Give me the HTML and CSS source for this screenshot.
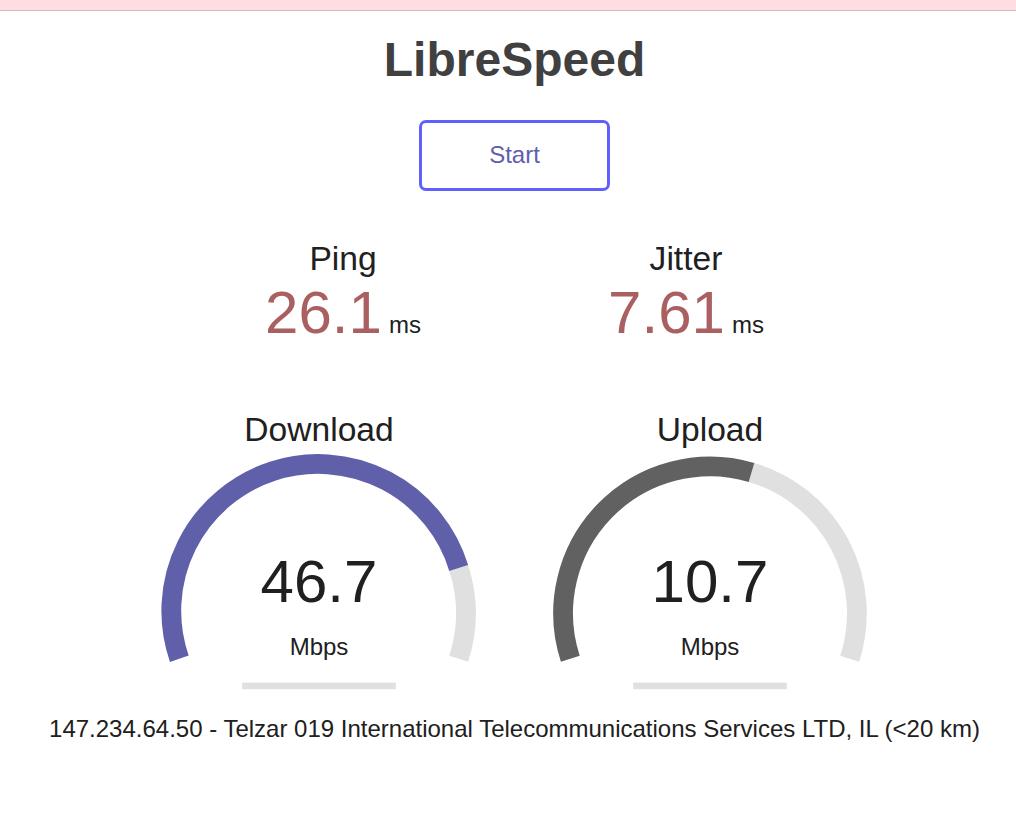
FILE: index.html
```html
<!DOCTYPE html>
<html lang="en">
<head>
  <meta charset="UTF-8">
  <title>LibreSpeed</title>
  <meta name="viewport" content="width=device-width,initial-scale=1.0">
  <link rel="stylesheet" href="styles.css">
</head>
<body>
  <div class="topbar"></div>
  <div class="page">
    <h1>LibreSpeed</h1>
    <div class="btnRow">
      <div id="startStopBtn">Start</div>
    </div>
    <div id="test">
      <div class="testGroup small">
        <div class="testArea2">
          <div class="testName">Ping</div>
          <div class="valueRow">
            <div class="meterText red">26.1</div>
            <div class="unit">ms</div>
          </div>
        </div>
        <div class="testArea2">
          <div class="testName">Jitter</div>
          <div class="valueRow">
            <div class="meterText red">7.61</div>
            <div class="unit">ms</div>
          </div>
        </div>
      </div>
      <div class="testGroup big">
        <div class="testArea">
          <div class="testName">Download</div>
          <svg class="meter" viewBox="0 0 384 300" width="384" height="300">
            <path d="M 331.7 159.0 A 146.9 146.9 0 0 1 331.7 249.7" fill="none" stroke="#E0E0E0" stroke-width="19.8"/>
            <path d="M 52.3 249.7 A 146.9 146.9 0 1 1 331.7 159.0" fill="none" stroke="#6060AA" stroke-width="19.8"/>
            <rect x="115.2" y="273.6" width="153.6" height="6.6" fill="#E0E0E0"/>
          </svg>
          <div class="meterText">46.7</div>
          <div class="unit">Mbps</div>
        </div>
        <div class="testArea">
          <div class="testName">Upload</div>
          <svg class="meter" viewBox="0 0 384 300" width="384" height="300">
            <path d="M 233.5 63.4 A 146.9 146.9 0 0 1 331.7 249.7" fill="none" stroke="#E0E0E0" stroke-width="19.8"/>
            <path d="M 52.3 249.7 A 146.9 146.9 0 0 1 233.5 63.4" fill="none" stroke="#616161" stroke-width="19.8"/>
            <rect x="115.2" y="273.6" width="153.6" height="6.6" fill="#E0E0E0"/>
          </svg>
          <div class="meterText">10.7</div>
          <div class="unit">Mbps</div>
        </div>
      </div>
      <div id="ipArea">147.234.64.50 - Telzar 019 International Telecommunications Services LTD, IL (&lt;20 km)</div>
    </div>
  </div>
</body>
</html>
```

FILE: styles.css
```css
html,body{
  border: none;
  padding: 0;
  margin: 0;
  background: #FFFFFF;
  color: #202020;
}
body{
  text-align: center;
  font-family: "Liberation Sans", Arial, sans-serif;
  font-size: 24px;
}
.topbar{
  height: 10px;
  background: #FFDDE3;
  border-bottom: 1px solid #D9B9C1;
}
.page{
  padding-left: 13px;
}
h1{
  color: #404040;
  font-size: 48px;
  line-height: 54px;
  margin: 22px 0 32px 0;
}
.btnRow{
  display: flex;
  justify-content: center;
  padding-top: 1px;
}
#startStopBtn{
  color: #6060AA;
  border: 3px solid #6060FF;
  border-radius: 7px;
  box-sizing: border-box;
  width: 191px;
  height: 71px;
  line-height: 64px;
  cursor: pointer;
}
#test{
  margin-top: 49px;
}
.testGroup{
  display: flex;
  justify-content: center;
  gap: 7px;
}
.testArea2{
  width: 336px;
  height: 169px;
}
.testArea2 .testName{
  font-size: 33.6px;
  line-height: 38px;
}
.valueRow{
  display: flex;
  justify-content: center;
  align-items: baseline;
  gap: 7px;
}
.testArea2 .meterText{
  font-size: 60px;
  line-height: 69px;
}
.red{
  color: #AA6060;
}
.testArea{
  position: relative;
  width: 384px;
  height: 300px;
  margin-bottom: 6px;
}
.meter{
  display: block;
}
.testArea .testName{
  position: absolute;
  top: 2px;
  left: 0;
  width: 100%;
  font-size: 33.6px;
  line-height: 38px;
}
.testArea .meterText{
  position: absolute;
  bottom: 93px;
  left: 0;
  width: 100%;
  font-size: 60px;
  line-height: 69px;
}
.testArea .unit{
  position: absolute;
  bottom: 49px;
  left: 0;
  width: 100%;
  line-height: 27px;
}
#ipArea{
  line-height: 27px;
}
```
